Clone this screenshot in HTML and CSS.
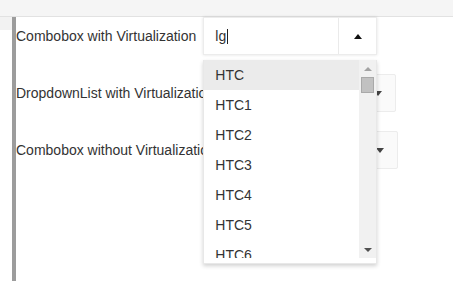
FILE: index.html
```html
<!DOCTYPE html>
<html lang="en">
<head>
  <meta charset="UTF-8">
  <meta name="viewport" content="width=device-width,initial-scale=1.0">
  <title>Virtualization demo</title>
  <link rel="stylesheet" href="styles.css">
</head>
<body>
  <div class="topbar"></div>
  <div class="main">
    <div class="gutter"><div class="gutter-top"></div></div>
    <div class="content">
      <!-- combobox, opened -->
      <div class="row">
        <label class="label">Combobox with Virtualization</label>
        <div class="combo focused">
          <div class="combo-input">lg<span class="caret"></span></div>
          <div class="combo-btn"><span class="arrow-up"></span></div>
          <div class="popup">
            <div class="list">
              <div class="item hover">HTC</div>
              <div class="item">HTC1</div>
              <div class="item">HTC2</div>
              <div class="item">HTC3</div>
              <div class="item">HTC4</div>
              <div class="item">HTC5</div>
              <div class="item">HTC6</div>
            </div>
            <div class="scrollbar">
              <div class="sb-btn"><span class="sb-up"></span></div>
              <div class="sb-track"><div class="sb-thumb"></div></div>
              <div class="sb-btn"><span class="sb-down"></span></div>
            </div>
          </div>
        </div>
      </div>
      <div class="row">
        <label class="label">DropdownList with Virtualization</label>
        <div class="ddl"><span class="arrow-down"></span></div>
      </div>
      <div class="row">
        <label class="label">Combobox without Virtualization</label>
        <div class="ddl"><span class="arrow-down"></span></div>
      </div>
    </div>
  </div>
</body>
</html>
```

FILE: styles.css
```css
body { margin: 0; font-family: "Liberation Sans", Arial, sans-serif; font-size: 14px; color: #333; background: #fff; }
.topbar { height: 16px; background: #f5f5f5; border-bottom: 1px solid #e2e2e2; }
.main { display: flex; height: 264px; }
.gutter { width: 12px; }
.gutter-top { height: 13px; background: #f2f2f2; }
.content { flex: 1; border-left: 4px solid #9c9c9c; display: flex; flex-direction: column; gap: 19px; }
.row { display: flex; align-items: center; gap: 7px; height: 38px; }
.label { white-space: nowrap; }
.combo { position: relative; display: flex; width: 172px; height: 36px; border: 1px solid #ececec; background: #fff; box-shadow: 0 0 3px rgba(0,0,0,0.12); }
.combo-input { flex: 1; padding-left: 11px; line-height: 36px; color: #333; }
.caret { display: inline-block; width: 1px; height: 15px; background: #222; vertical-align: -3px; margin-left: 1px; }
.combo-btn { width: 37px; border-left: 1px solid #eaeaea; display: flex; align-items: center; justify-content: center; }
.arrow-up { width: 0; height: 0; border-left: 4px solid transparent; border-right: 4px solid transparent; border-bottom: 5px solid #111; margin-left: 1px; }
.arrow-down { width: 0; height: 0; border-left: 4px solid transparent; border-right: 4px solid transparent; border-top: 5px solid #444; }
.ddl { width: 160px; height: 36px; border: 1px solid #ececec; border-radius: 2px; background: #fafafa; display: flex; align-items: center; justify-content: flex-end; padding-right: 13px; }
.popup { position: absolute; left: -1px; top: 42px; width: 172px; padding-bottom: 5px; background: #fff; border: 1px solid #e8e8e8; border-top: none; box-shadow: 0 2px 4px rgba(0,0,0,0.18); display: flex; z-index: 2; }
.list { flex: 1; height: 198px; overflow: hidden; }
.item { height: 30px; line-height: 31px; padding-left: 11px; }
.item.hover { background: #ebebeb; }
.scrollbar { width: 17px; height: 198px; background: #f1f1f1; display: flex; flex-direction: column; }
.sb-btn { height: 17px; display: flex; align-items: center; justify-content: center; }
.sb-up { width: 0; height: 0; border-left: 4px solid transparent; border-right: 4px solid transparent; border-bottom: 4px solid #a3a3a3; }
.sb-down { width: 0; height: 0; border-left: 4px solid transparent; border-right: 4px solid transparent; border-top: 4px solid #505050; }
.sb-track { flex: 1; padding: 0 2px; }
.sb-thumb { height: 14px; background: #c1c1c1; border: 1px solid #a9a9a9; }
```
